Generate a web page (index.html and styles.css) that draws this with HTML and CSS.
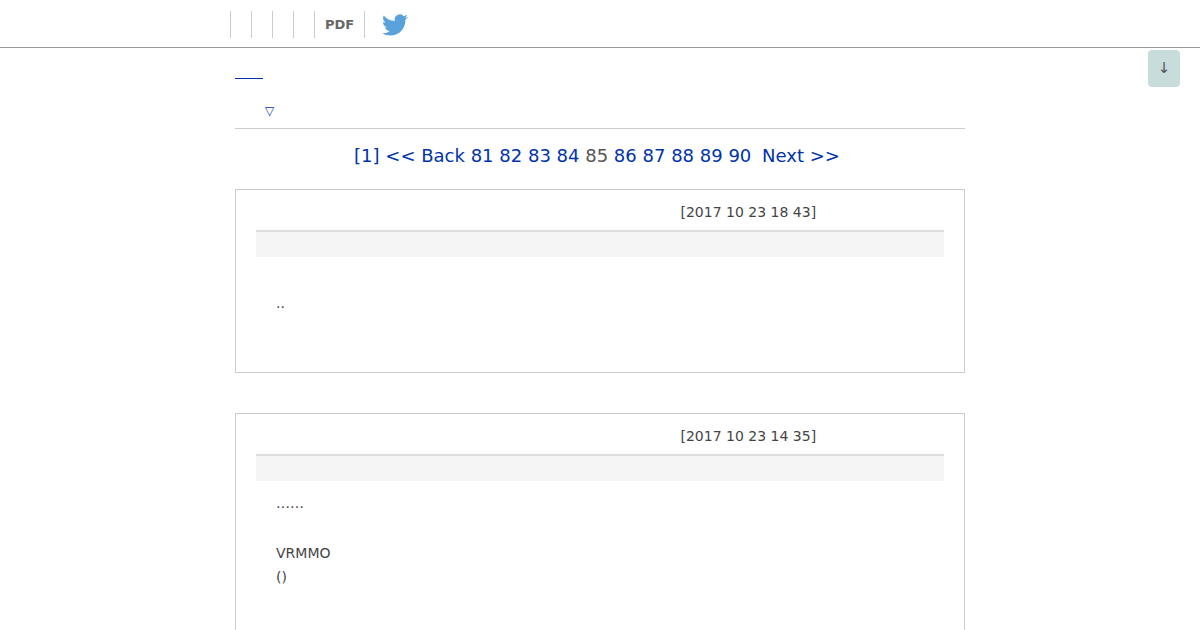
FILE: index.html
```html
<!DOCTYPE html>
<html lang="en">

<head>
  <meta charset="UTF-8">
  <title>Novel</title>
  <link rel="stylesheet" href="styles.css">
</head>

<body>
  <header class="topbar">
    <nav class="topnav">
      <a class="topnav-item" href="#"></a>
      <a class="topnav-item" href="#"></a>
      <a class="topnav-item" href="#"></a>
      <a class="topnav-item" href="#"></a>
      <a class="topnav-item topnav-pdf" href="#">PDF</a>
      <a class="topnav-bird" href="#" aria-label="Twitter">
        <svg viewBox="0 0 24 24" width="26" height="26">
          <path fill="#5aa2dc" d="M23.95 4.57a10 10 0 0 1-2.82.77 4.96 4.96 0 0 0 2.16-2.72c-.95.55-2 .96-3.12 1.19a4.92 4.92 0 0 0-8.38 4.48C7.69 8.1 4.07 6.13 1.64 3.16a4.82 4.82 0 0 0-.67 2.48c0 1.71.87 3.21 2.19 4.1a4.9 4.9 0 0 1-2.23-.62v.06a4.92 4.92 0 0 0 3.95 4.83 5 5 0 0 1-2.21.08 4.94 4.94 0 0 0 4.6 3.42A9.87 9.87 0 0 1 0 19.54a13.99 13.99 0 0 0 7.56 2.21c9.05 0 14-7.5 14-13.98 0-.21 0-.42-.02-.63a9.94 9.94 0 0 0 2.46-2.55z"/>
        </svg>
      </a>
    </nav>
  </header>

  <a class="to-bottom" href="#">↓</a>

  <main class="content">
    <p class="title-line"><a class="title-link" href="#"></a></p>
    <p class="sort-line"><a class="sort-link" href="#">▽</a></p>

    <div class="pager">
      <a href="#">[1]</a>
      <a href="#">&lt;&lt; Back</a>
      <a href="#">81</a>
      <a href="#">82</a>
      <a href="#">83</a>
      <a href="#">84</a>
      <span class="pager-now">85</span>
      <a href="#">86</a>
      <a href="#">87</a>
      <a href="#">88</a>
      <a href="#">89</a>
      <a href="#">90</a>
      <a class="pager-next" href="#">Next &gt;&gt;</a>
    </div>

    <article class="review">
      <div class="review-date">[2017 10 23 18 43]</div>
      <div class="review-head"></div>
      <div class="review-body review-body-short">
        <p>..</p>
      </div>
    </article>

    <article class="review">
      <div class="review-date">[2017 10 23 14 35]</div>
      <div class="review-head"></div>
      <div class="review-body">
        <p>……</p>
        <p class="gap">VRMMO</p>
        <p>()</p>
      </div>
    </article>
  </main>
</body>

</html>
```
FILE: styles.css
```css
body {
  margin: 0;
  font-family: "DejaVu Sans", sans-serif;
  font-size: 14px;
  color: #444;
  background-color: #fff;
  overflow: hidden;
}

a {
  color: #0033aa;
  text-decoration: none;
}

p {
  margin: 0;
}

.topbar {
  height: 47px;
  border-bottom: 1px solid #999;
}

.topnav {
  display: flex;
  align-items: flex-start;
  margin-left: 230px;
  padding-top: 11px;
}

.topnav-item {
  box-sizing: border-box;
  width: 21px;
  height: 27px;
  border-left: 1px solid #ccc;
}

.topnav-pdf {
  border-right: 1px solid #ccc;
  width: 51px;
  padding-left: 10px;
  font-size: 13px;
  font-weight: bold;
  line-height: 27px;
  color: #666;
}

.topnav-bird {
  display: block;
  margin: 1px 0 0 17px;
  height: 26px;
}

.to-bottom {
  position: fixed;
  top: 50px;
  left: 1148px;
  width: 32px;
  height: 37px;
  border-radius: 4px;
  background-color: #c8dcdc;
  color: #555;
  font-size: 15px;
  line-height: 36px;
  text-align: center;
}

.content {
  width: 730px;
  margin: 0 auto;
}

.title-line {
  height: 30px;
}

.title-link {
  display: block;
  width: 28px;
  height: 30px;
  border-bottom: 1px solid #0033aa;
}

.sort-line {
  height: 51px;
  box-sizing: border-box;
  padding: 24px 0 0 30px;
  border-bottom: 1px solid #ccc;
  font-size: 12px;
  line-height: 18px;
}

.pager {
  margin: 15px 0 21px;
  padding-right: 6px;
  font-size: 18px;
  line-height: 24px;
  text-align: center;
}

.pager-now {
  color: #555;
}

.pager-next {
  margin-left: 5px;
}

.review {
  margin-bottom: 40px;
  padding: 0 20px;
  border: 1px solid #ccc;
}

.review-date {
  padding: 14px 0 9px 424.5px;
  line-height: 17px;
}

.review-head {
  height: 25px;
  border-top: 2px solid #ddd;
  background-color: #f5f5f5;
}

.review-body {
  min-height: 200px;
  padding: 10px 20px 0;
  line-height: 24.5px;
}

.review-body-short {
  min-height: 0;
  height: 81px;
  padding-top: 34px;
}

.gap {
  margin-top: 25px;
}
```
